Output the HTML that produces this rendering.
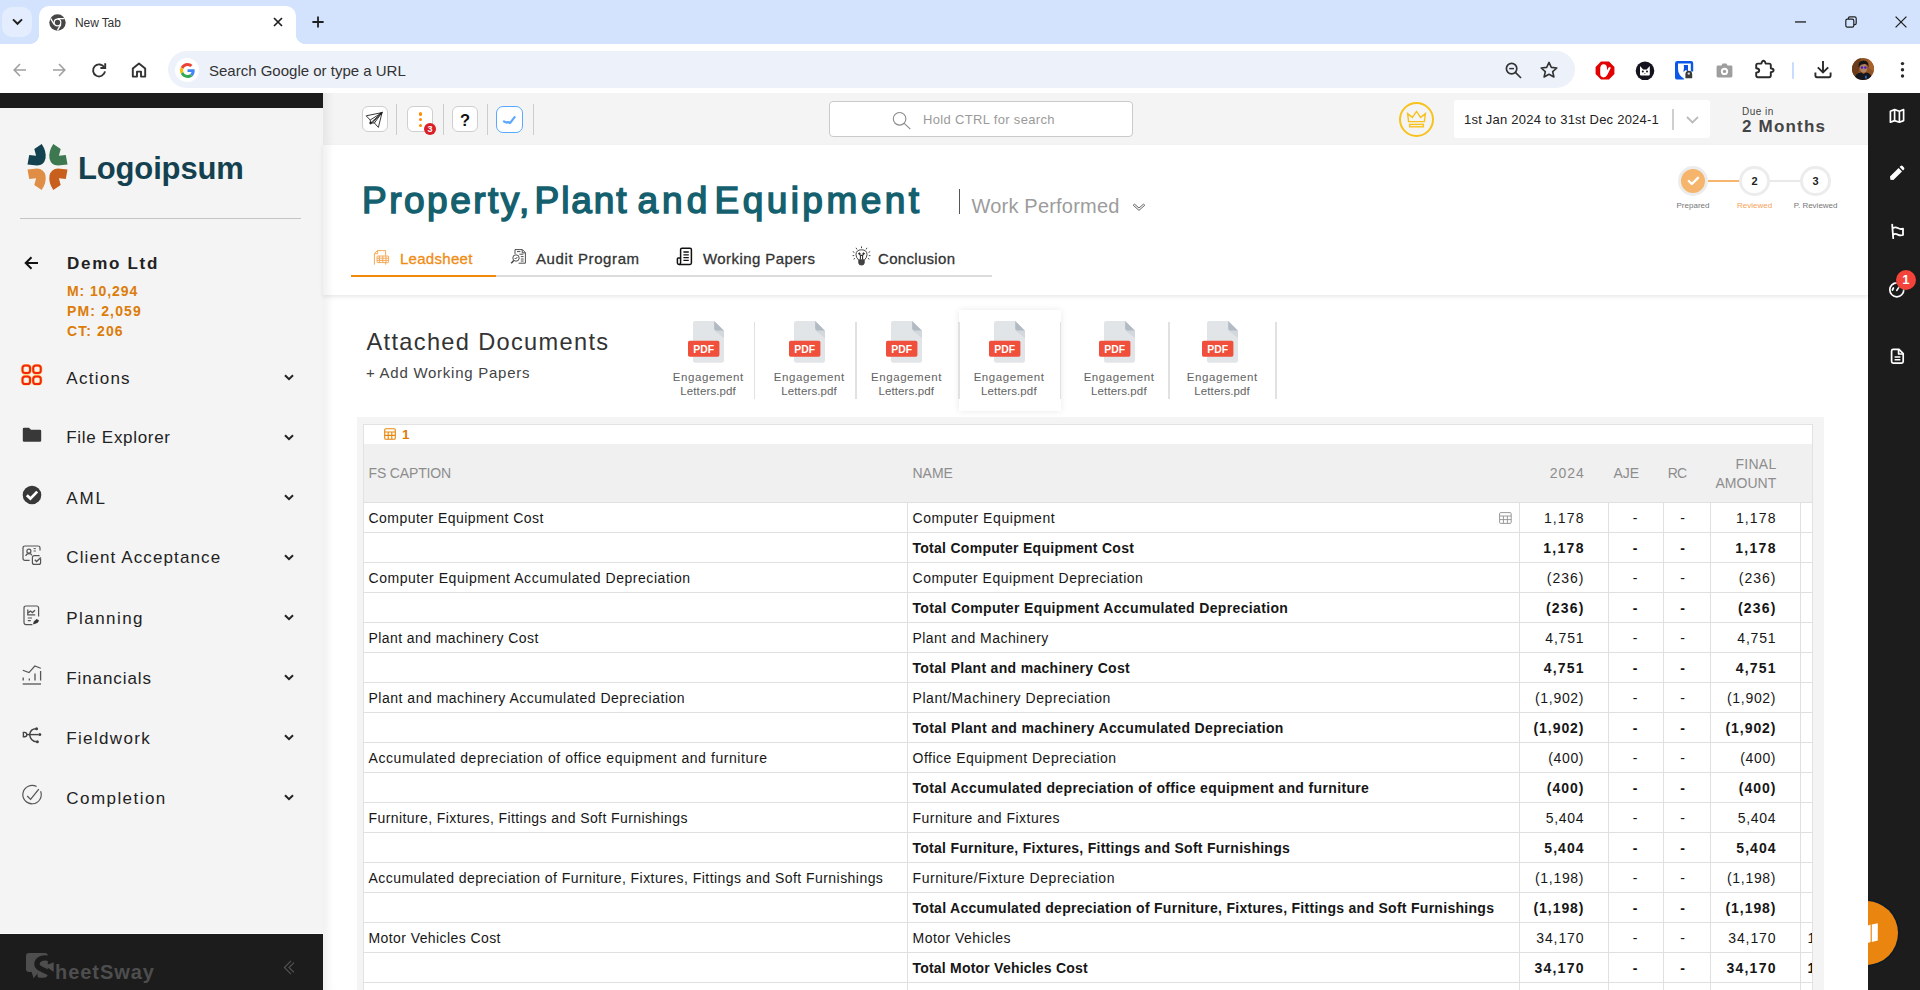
<!DOCTYPE html>
<html>
<head>
<meta charset="utf-8">
<title>New Tab</title>
<style>
*{box-sizing:border-box;margin:0;padding:0}
html,body{width:1920px;height:990px;overflow:hidden;background:#fff;font-family:"Liberation Sans",sans-serif;color:#222}
.abs{position:absolute}
svg{position:absolute;overflow:visible}
/* ---------- browser chrome ---------- */
#tabstrip{position:absolute;left:0;top:0;width:1920px;height:44px;background:#d3e3fd}
#tabsearch{position:absolute;left:2px;top:7px;width:30px;height:30px;border-radius:10px;background:#e4edfd}
#tab{position:absolute;left:39px;top:6px;width:257px;height:38px;background:#fff;border-radius:10px 10px 0 0}
#tab:before,#tab:after{content:"";position:absolute;bottom:0;width:10px;height:10px}
#tab:before{left:-10px;background:radial-gradient(circle at 0 0,transparent 10px,#fff 10.5px)}
#tab:after{right:-10px;background:radial-gradient(circle at 100% 0,transparent 10px,#fff 10.5px)}
#tabtitle{position:absolute;left:75px;top:15.5px;font-size:12px;color:#333;letter-spacing:-.1px}
#toolbar{position:absolute;left:0;top:44px;width:1920px;height:49px;background:#fff}
#omni{position:absolute;left:168px;top:51px;width:1407px;height:37px;border-radius:19px;background:#edf2fa}
#omnitext{position:absolute;left:209px;top:62px;font-size:15px;color:#333;white-space:nowrap}
/* ---------- app shell ---------- */
#side{position:absolute;left:0;top:93px;width:323px;height:897px;background:#f4f4f4}
#sidetop{position:absolute;left:0;top:93px;width:323px;height:15px;background:#1c1c1c}
#sidebot{position:absolute;left:0;top:932.8px;width:323px;height:57px;background:#1c1c1c;border-top:1px solid #fbfbfb}
#rside{position:absolute;left:1868px;top:93px;width:52px;height:897px;background:#1c1c1c}
#topbar{position:absolute;left:323px;top:93px;width:1545px;height:52px;background:#f4f4f4}
.mi{position:absolute;left:66.3px;font-size:17px;letter-spacing:.95px;color:#222;white-space:nowrap}
</style>
</head>
<body>
<!-- BROWSER CHROME -->
<div id="tabstrip"></div>
<div id="tabsearch"></div>
<div id="tab"></div>
<div id="tabtitle">New Tab</div>
<div id="toolbar"></div>
<div id="omni"></div>
<div id="omnitext">Search Google or type a URL</div>
<!--CHROME-ICONS-START-->
<!-- tab strip icons -->
<svg style="left:12px;top:18px" width="11" height="8" viewBox="0 0 11 8" fill="none" stroke="#1f1f1f" stroke-width="1.9"><path d="M1,1.4 L5.5,5.8 L10,1.4"/></svg>
<svg style="left:49px;top:14px" width="17" height="17" viewBox="0 0 17 17"><circle cx="8.5" cy="8.5" r="8.2" fill="#474747"/><circle cx="8.5" cy="8.5" r="3.9" fill="#fff"/><circle cx="8.5" cy="8.5" r="2.7" fill="#474747"/><path d="M8.5,4.6 H15.6 M5.1,10.4 L1.6,4.4 M11.9,10.4 L8.4,16.4" stroke="#fff" stroke-width="1.3" fill="none"/></svg>
<svg style="left:273px;top:17px" width="10" height="10" viewBox="0 0 10 10" fill="none" stroke="#1f1f1f" stroke-width="1.7"><path d="M1,1 L9,9 M9,1 L1,9"/></svg>
<svg style="left:312px;top:16px" width="12" height="12" viewBox="0 0 12 12" fill="none" stroke="#1f1f1f" stroke-width="1.8"><path d="M6,0.4 V11.6 M0.4,6 H11.6"/></svg>
<svg style="left:1795px;top:21px" width="11" height="2" viewBox="0 0 11 2"><rect width="11" height="1.3" y=".3" fill="#1f1f1f"/></svg>
<svg style="left:1845px;top:16px" width="12" height="12" viewBox="0 0 12 12" fill="none" stroke="#1f1f1f" stroke-width="1.2"><rect x=".8" y="3.2" width="8" height="8" rx="1.6"/><path d="M3.4,3 V2.2 Q3.4,.8 4.8,.8 H9.6 Q11.2,.8 11.2,2.4 V7.2 Q11.2,8.6 9.8,8.6 H9"/></svg>
<svg style="left:1895px;top:16px" width="12" height="12" viewBox="0 0 12 12" fill="none" stroke="#1f1f1f" stroke-width="1.3"><path d="M.6,.6 L11.4,11.4 M11.4,.6 L.6,11.4"/></svg>
<!-- toolbar nav -->
<svg style="left:13px;top:63px" width="14" height="14" viewBox="0 0 14 14" fill="none" stroke="#a0a0a0" stroke-width="1.6"><path d="M13,7 H1.6 M7,1 L1.2,7 L7,13"/></svg>
<svg style="left:52px;top:63px" width="14" height="14" viewBox="0 0 14 14" fill="none" stroke="#a0a0a0" stroke-width="1.6"><path d="M1,7 H12.4 M7,1 L12.8,7 L7,13"/></svg>
<svg style="left:91px;top:62px" width="16" height="16" viewBox="0 0 16 16" fill="none" stroke="#333" stroke-width="1.9"><path d="M13.4,5.6 A6,6 0 1 0 14,9.4"/><path d="M14.2,1.2 V6 H9.4" stroke-linejoin="miter"/></svg>
<svg style="left:131px;top:62px" width="16" height="16" viewBox="0 0 16 16" fill="none" stroke="#333" stroke-width="1.9" stroke-linejoin="round"><path d="M1.8,14.6 V6.6 L8,1.6 L14.2,6.6 V14.6 H10 V9.6 H6 V14.6 Z"/></svg>
<div class="abs" style="left:175px;top:58px;width:24px;height:24px;border-radius:50%;background:#fff"></div>
<svg style="left:179.5px;top:62.5px" width="15" height="15" viewBox="0 0 48 48"><path fill="#EA4335" d="M24 9.5c3.54 0 6.71 1.22 9.21 3.6l6.85-6.85C35.9 2.38 30.47 0 24 0 14.62 0 6.51 5.38 2.56 13.22l7.98 6.19C12.43 13.72 17.74 9.5 24 9.5z"/><path fill="#4285F4" d="M46.98 24.55c0-1.57-.15-3.09-.38-4.55H24v9.02h12.94c-.58 2.96-2.26 5.48-4.78 7.18l7.73 6c4.51-4.18 7.09-10.36 7.09-17.65z"/><path fill="#FBBC05" d="M10.53 28.59c-.48-1.45-.76-2.99-.76-4.59s.27-3.14.76-4.59l-7.98-6.19C.92 16.46 0 20.12 0 24c0 3.880.92 7.54 2.56 10.78l7.97-6.19z"/><path fill="#34A853" d="M24 48c6.48 0 11.93-2.130 15.89-5.81l-7.73-6c-2.15 1.450-4.92 2.300-8.160 2.300-6.260 0-11.570-4.220-13.470-9.910l-7.980 6.190C6.510 42.620 14.620 48 24 48z"/></svg>
<!-- omnibox right icons -->
<svg style="left:1505px;top:62px" width="17" height="17" viewBox="0 0 17 17" fill="none" stroke="#333" stroke-width="1.7"><circle cx="6.6" cy="6.6" r="5.2"/><path d="M10.4,10.4 L16,16"/><path d="M4.2,6.6 H9" stroke-width="1.5"/></svg>
<svg style="left:1540px;top:61px" width="18" height="17" viewBox="0 0 18 17" fill="none" stroke="#333" stroke-width="1.6" stroke-linejoin="round"><path d="M9,1.4 L11.3,6.4 L16.8,7 L12.7,10.7 L13.9,16 L9,13.2 L4.1,16 L5.3,10.7 L1.2,7 L6.7,6.4 Z"/></svg>
<!-- extensions -->
<svg style="left:1595px;top:61px" width="20" height="19" viewBox="0 0 20 19"><path d="M6,0.6 H14 L19.4,6 V13 L14,18.4 H6 L0.6,13 V6 Z" fill="#e30000"/><path d="M5.2,8 Q5.2,3.4 8.6,3.2 Q12,3.2 12,7.6 V9.4 L13.6,6.6 Q14.4,5.6 15.4,6.2 Q16,6.8 15.4,7.8 L12.2,14 Q11,16.4 8.6,16.4 Q5.2,16.4 5.2,12.6 Z" fill="#fff"/></svg>
<svg style="left:1635px;top:61px" width="20" height="20" viewBox="0 0 20 20"><circle cx="10" cy="9.8" r="9.3" fill="#14131f"/><path d="M5,5 L8.2,8.4 H11.6 L14.8,5 V13.4 Q14.8,14.4 13.8,14.4 H6 Q5,14.4 5,13.4 Z" fill="#fff"/><circle cx="7.8" cy="10.6" r="1" fill="#14131f"/><circle cx="12" cy="10.6" r="1" fill="#14131f"/><path d="M9.1,12.2 H10.7 L9.9,13.3 Z" fill="#14131f"/></svg>
<svg style="left:1675px;top:61px" width="19" height="19" viewBox="0 0 19 19"><path d="M2.4,0 H16 Q18.2,0 18.2,2.2 V10.4 H11 L9,18.6 H2.2 Q0,18.6 0,16.4 V2.4 Q0,0 2.4,0 Z" fill="#0b57e8"/><path d="M3,2.6 H15.8 V10.4 L9.4,18 Q3,14 3,8 Z" fill="#fff"/><path d="M8.8,4 H13 V10.6 L10.9,9 L8.4,11 Q9.4,7.4 8.8,4 Z" fill="#0b4fe0"/><path d="M10.4,13.4 Q10.4,9.8 13.8,9.8 Q17.2,9.8 17.2,13.4 V17.2 H10.4 Z" fill="#3a3a3a"/><circle cx="13.8" cy="12.6" r="1.2" fill="#d8d8d8"/></svg>
<svg style="left:1716px;top:63px" width="17" height="15" viewBox="0 0 17 15"><path d="M5.4,2.4 L6.6,0.6 H10.4 L11.6,2.4 H15 Q16.4,2.4 16.4,3.8 V13 Q16.4,14.4 15,14.4 H2 Q0.6,14.4 0.6,13 V3.8 Q0.6,2.4 2,2.4 Z" fill="#9e9e9e"/><circle cx="8.5" cy="8.4" r="3.6" fill="#fff"/><circle cx="8.5" cy="8.4" r="1.7" fill="#9e9e9e"/></svg>
<svg style="left:1755px;top:60px" width="20" height="19" viewBox="0 0 20 19" fill="none" stroke="#2a2a2a" stroke-width="1.9" stroke-linejoin="round"><path d="M2.8,3.6 H6.4 Q7,0.8 8.5,0.8 Q10,0.8 10.6,3.6 H14.2 Q15.8,3.6 15.8,5.2 V8.2 Q18.6,8.6 18.6,10.2 Q18.6,11.8 15.8,12.2 V15.6 Q15.8,17.2 14.2,17.2 H2.8 Q1.2,17.2 1.2,15.6 V12.6 Q4.2,12.4 4.2,10.4 Q4.2,8.4 1.2,8.2 V5.2 Q1.2,3.6 2.8,3.6 Z"/></svg>
<div class="abs" style="left:1791.8px;top:61.5px;width:2.2px;height:17px;background:#c9dcfc;border-radius:1px"></div>
<svg style="left:1814px;top:60px" width="18" height="19" viewBox="0 0 18 19" fill="none" stroke="#2a2a2a" stroke-width="1.9"><path d="M9,1 V12 M3.8,7.4 L9,12.4 L14.2,7.4"/><path d="M1.4,12.6 V15.6 Q1.4,17.2 3,17.2 H15 Q16.6,17.2 16.6,15.6 V12.6"/></svg>
<svg style="left:1852px;top:58.3px" width="22" height="22" viewBox="0 0 22 22"><defs><clipPath id="avc"><circle cx="11" cy="11" r="11"/></clipPath></defs><g clip-path="url(#avc)"><rect width="22" height="22" fill="#8e5326"/><path d="M0,0 H9 L5,22 H0 Z" fill="#6b3d1c"/><path d="M16,0 H22 V14 L17,10 Z" fill="#a8622a"/><ellipse cx="11.6" cy="10.2" rx="3.6" ry="4.6" fill="#b08462"/><path d="M6.4,9.6 Q6,2.4 11.6,2.6 Q17,2.6 16.6,9.4 Q15.4,5.6 11.6,6.2 Q8.4,6 6.4,9.6 Z" fill="#141414"/><circle cx="10" cy="9.6" r="1.3" fill="#4a22c8"/><circle cx="13.4" cy="9.6" r="1.3" fill="#4a22c8"/><path d="M2,22 Q3,14.6 9.4,14.4 L11.6,16 L13.8,14.4 Q19.6,14.6 20.4,22 Z" fill="#15171c"/><path d="M13,18 L14.6,17.4 L14.8,20.4 L13.2,20.6 Z" fill="#2f6fd6"/></g></svg>
<svg style="left:1900px;top:61px" width="5" height="18" viewBox="0 0 5 18" fill="#2a2a2a"><circle cx="2.5" cy="2.6" r="1.7"/><circle cx="2.5" cy="8.8" r="1.7"/><circle cx="2.5" cy="15" r="1.7"/></svg>
<!--CHROME-ICONS-END-->

<!-- APP SHELL -->
<div id="side"></div>
<div id="sidetop"></div>
<div id="sidebot"></div>
<div id="topbar"></div>
<div id="rside"></div>
<!--SIDEBAR-START-->
<!-- logo -->
<svg style="left:27px;top:144px" width="41" height="46" viewBox="-20.5 -23 41 46">
  <path d="M-13.2,-18 L-5.8,-23 Q-0.8,-15.5 -2,-8.5 Q-3.6,-1.6 -10.5,-1.4 L-20,-2.6 L-18.3,-12 L-11.4,-11.2 Z" fill="#14414f"/>
  <path d="M-13.2,-18 L-5.8,-23 Q-0.8,-15.5 -2,-8.5 Q-3.6,-1.6 -10.5,-1.4 L-20,-2.6 L-18.3,-12 L-11.4,-11.2 Z" transform="scale(-1,1)" fill="#3d7850"/>
  <path d="M-13.2,-18 L-5.8,-23 Q-0.8,-15.5 -2,-8.5 Q-3.6,-1.6 -10.5,-1.4 L-20,-2.6 L-18.3,-12 L-11.4,-11.2 Z" transform="scale(1,-1)" fill="#e08e45"/>
  <path d="M-13.2,-18 L-5.8,-23 Q-0.8,-15.5 -2,-8.5 Q-3.6,-1.6 -10.5,-1.4 L-20,-2.6 L-18.3,-12 L-11.4,-11.2 Z" transform="scale(-1,-1)" fill="#c95f1c"/>
</svg>
<div class="abs" style="left:78px;top:151px;font-size:31px;font-weight:bold;color:#14414f;letter-spacing:-.15px;line-height:35px">Logoipsum</div>
<div class="abs" style="left:20px;top:218px;width:281px;height:1px;background:#c4c4c4"></div>
<!-- client -->
<svg style="left:24px;top:256px" width="15" height="14" viewBox="0 0 15 14"><path d="M14,7 H2 M7.5,1.2 L1.7,7 L7.5,12.8" fill="none" stroke="#111" stroke-width="2"/></svg>
<div class="abs" style="left:67px;top:254px;font-size:17px;font-weight:bold;letter-spacing:1.7px;color:#222;white-space:nowrap">Demo Ltd</div>
<div class="abs" style="left:67px;top:283px;font-size:14px;font-weight:bold;letter-spacing:.9px;color:#dc7c0a;white-space:nowrap">M: 10,294</div>
<div class="abs" style="left:67px;top:303px;font-size:14px;font-weight:bold;letter-spacing:1.15px;color:#dc7c0a;white-space:nowrap">PM: 2,059</div>
<div class="abs" style="left:67px;top:323px;font-size:14px;font-weight:bold;letter-spacing:1.1px;color:#dc7c0a;white-space:nowrap">CT: 206</div>
<!-- menu -->
<div class="mi" style="top:368.5px;letter-spacing:1.26px">Actions</div>
<div class="mi" style="top:427.5px;letter-spacing:0.69px">File Explorer</div>
<div class="mi" style="top:488.8px;letter-spacing:1.90px">AML</div>
<div class="mi" style="top:548.0px;letter-spacing:1.11px">Client Acceptance</div>
<div class="mi" style="top:608.5px;letter-spacing:1.44px">Planning</div>
<div class="mi" style="top:668.5px;letter-spacing:0.90px">Financials</div>
<div class="mi" style="top:728.5px;letter-spacing:1.33px">Fieldwork</div>
<div class="mi" style="top:788.8px;letter-spacing:1.44px">Completion</div>
<!-- chevrons -->
<svg style="left:284px;top:374px" width="10" height="7" viewBox="0 0 10 7"><path d="M1,1.2 L5,5.2 L9,1.2" fill="none" stroke="#222" stroke-width="2"/></svg>
<svg style="left:284px;top:434px" width="10" height="7" viewBox="0 0 10 7"><path d="M1,1.2 L5,5.2 L9,1.2" fill="none" stroke="#222" stroke-width="2"/></svg>
<svg style="left:284px;top:494px" width="10" height="7" viewBox="0 0 10 7"><path d="M1,1.2 L5,5.2 L9,1.2" fill="none" stroke="#222" stroke-width="2"/></svg>
<svg style="left:284px;top:554px" width="10" height="7" viewBox="0 0 10 7"><path d="M1,1.2 L5,5.2 L9,1.2" fill="none" stroke="#222" stroke-width="2"/></svg>
<svg style="left:284px;top:614px" width="10" height="7" viewBox="0 0 10 7"><path d="M1,1.2 L5,5.2 L9,1.2" fill="none" stroke="#222" stroke-width="2"/></svg>
<svg style="left:284px;top:674px" width="10" height="7" viewBox="0 0 10 7"><path d="M1,1.2 L5,5.2 L9,1.2" fill="none" stroke="#222" stroke-width="2"/></svg>
<svg style="left:284px;top:734px" width="10" height="7" viewBox="0 0 10 7"><path d="M1,1.2 L5,5.2 L9,1.2" fill="none" stroke="#222" stroke-width="2"/></svg>
<svg style="left:284px;top:794px" width="10" height="7" viewBox="0 0 10 7"><path d="M1,1.2 L5,5.2 L9,1.2" fill="none" stroke="#222" stroke-width="2"/></svg>
<!-- menu icons -->
<svg style="left:21px;top:364px" width="22" height="22" viewBox="0 0 22 22" fill="none" stroke="#ffb700" stroke-width="3.2" opacity=".55"><rect x="1.5" y="1.5" width="7.6" height="7.6" rx="2.6"/><rect x="12.2" y="1.5" width="7.6" height="7.6" rx="2.6"/><rect x="1.5" y="12.4" width="7.6" height="7.6" rx="2.6"/><rect x="12.2" y="12.4" width="7.6" height="7.6" rx="2.6"/></svg>
<svg style="left:21px;top:364px" width="22" height="22" viewBox="0 0 22 22" fill="none" stroke="#f5260f" stroke-width="2"><rect x="1.5" y="1.5" width="7.6" height="7.6" rx="2.6"/><rect x="12.2" y="1.5" width="7.6" height="7.6" rx="2.6"/><rect x="1.5" y="12.4" width="7.6" height="7.6" rx="2.6"/><rect x="12.2" y="12.4" width="7.6" height="7.6" rx="2.6"/></svg>
<svg style="left:22px;top:427px" width="20" height="16" viewBox="0 0 20 16"><path d="M0.8,2 Q0.8,0.8 2,0.8 H7 L9,2.8 H18 Q19.2,2.8 19.2,4 V13.6 Q19.2,14.8 18,14.8 H2 Q0.8,14.8 0.8,13.6 Z" fill="#383838"/></svg>
<svg style="left:22px;top:485px" width="20" height="20" viewBox="0 0 20 20"><circle cx="10" cy="10" r="9.3" fill="#383838"/><path d="M4.8,10.2 L8.4,13.6 L15.2,6.6" fill="none" stroke="#fff" stroke-width="2.7"/></svg>
<svg style="left:22px;top:545px" width="21" height="21" viewBox="0 0 21 21" fill="none" stroke="#555" stroke-width="1.2"><path d="M7.6,15.4 H3 Q1,15.4 1,13.4 V3 Q1,1 3,1 H16 Q18,1 18,3 V5.6"/><circle cx="6.9" cy="6.2" r="2"/><path d="M3.8,11 Q4.2,8.6 6.9,8.6 Q9.4,8.6 9.9,10.4"/><path d="M11.6,3.6 H13.8 M11.6,6 H13.8" stroke-width="1"/><path d="M18.6,13.6 V17.4 Q18.6,19.4 16.6,19.4 H12.4 Q10.4,19.4 10.4,17.4 V12.6 Q10.4,10.6 12.4,10.6 H17.6"/><path d="M12.8,14.8 L14.6,16.6 L18.8,12.4" stroke-width="1.4"/></svg>
<svg style="left:23px;top:605px" width="18" height="21" viewBox="0 0 18 21" fill="none" stroke="#555" stroke-width="1.2"><path d="M9.4,19.6 H3 Q1,19.6 1,17.6 V3 Q1,1 3,1 H13.6 Q15.6,1 15.6,3 V11.6"/><path d="M4.8,4.6 V9.8 H12.2 M5.4,7.8 L7.4,6 L9.4,7.6 L12,5.2" stroke-width="1.3"/><path d="M4.8,13 H9 M4.8,15.6 H7.8"/><path d="M10.6,19 L11.2,16.6 L13.4,14.4 L15.6,15.4 L14.6,17.4 Z" fill="#333" stroke="#333" stroke-width=".8"/></svg>
<svg style="left:22px;top:665px" width="21" height="21" viewBox="0 0 21 21" fill="none" stroke="#555" stroke-width="1.3"><path d="M.7,19 H19"/><path d="M1.2,12.6 V15.6 M7.3,13.4 V15.6 M13,8.6 V15.6 M18.6,6 V15.6"/><path d="M.8,5.2 L7,7.6 L12.8,1 L18.8,3.2" stroke-width="1.2"/></svg>
<svg style="left:22px;top:726px" width="21" height="19" viewBox="0 0 21 19" fill="none" stroke="#444" stroke-width="1.4"><path d="M2.6,6.4 H1.4 V10.8 H2.6 Q4.8,10.8 4.8,8.6 Q4.8,6.4 2.6,6.4 Z"/><path d="M5,8.6 H16.4"/><path d="M7.6,8.6 Q8.6,2.8 14,2.8"/><path d="M7.6,8.6 Q8.6,15.6 14.6,15.8"/><circle cx="14.6" cy="2.8" r="1.5" fill="#444" stroke="none"/><circle cx="17.8" cy="8.6" r="1.5" fill="#444" stroke="none"/><circle cx="15.4" cy="15.8" r="1.5" fill="#444" stroke="none"/></svg>
<svg style="left:22px;top:785px" width="21" height="21" viewBox="0 0 21 21" fill="none" stroke="#555" stroke-width="1.2"><path d="M14.6,1.6 A9.2,9.2 0 1 0 18.6,6.2"/><path d="M5.2,11 L8.6,14.4 L16.8,4.2" stroke-width="1.3"/></svg>
<!-- sidebar bottom brand -->
<svg style="left:24px;top:951px" width="32" height="29" viewBox="24 951 32 29"><path d="M29,953 H45 Q47.8,953 47.8,956 V974 Q47.8,977.8 43,977.8 H39.5 Q37,977.8 37.5,973.6 L33.6,978.3 L31.6,972 H29 Q26,972 26,969 V956 Q26,953 29,953 Z" fill="#4e4e4e"/><path d="M49.5,958.6 Q45,957 41,958.6 Q36.6,960.6 36.9,964.6 Q37.2,967.6 42,969.4 L55,975.6" fill="none" stroke="#1c1c1c" stroke-width="5.2"/><path d="M41.8,964.3 Q46,966.2 53.7,962.2 V972 Q48,967.6 41.8,964.3 Z" fill="#4e4e4e"/></svg>
<div class="abs" style="left:55px;top:960.5px;font-size:20px;font-weight:bold;color:#4e4e4e;letter-spacing:.95px;white-space:nowrap;line-height:23px">heetSway</div>
<svg style="left:283px;top:960px" width="12" height="15" viewBox="0 0 12 15" fill="none" stroke="#555" stroke-width="1.1"><path d="M8,0.8 L1.4,7.5 L8,14.2 M11,2.6 L6,7.5 L11,12.4"/></svg>
<!--SIDEBAR-END-->
<!--TOPBAR-START-->
<style>
.tb{position:absolute;top:106px;width:26px;height:26px;background:#fff;border:1px solid #cfcfcf;border-radius:6px}
.tsep{position:absolute;top:104px;width:1px;height:31px;background:#cdcdcd}
.t{position:absolute;white-space:nowrap}
.ttl{top:179px;font-size:37px;font-weight:normal;-webkit-text-stroke:1.5px #15606e;color:#15606e;line-height:44px}
</style>
<div class="tb" style="left:362px"></div>
<svg style="left:365px;top:111px" width="19" height="18" viewBox="0 0 19 18" fill="none" stroke="#222" stroke-width=".9" stroke-linejoin="round"><path d="M17,1.6 L1.2,4.8 L5.2,9 L5.6,12 L9.4,12 L13.4,16.4 Z"/><path d="M17,1.6 L5.2,9 M17,1.6 L5.6,12 M17,1.6 L9.4,12 M16,2.4 L7.4,12"/><path d="M17.4,1 L14.6,2.6 L16,4 Z" fill="#111"/><circle cx="5.6" cy="12" r=".9" fill="#111"/></svg>
<div class="tsep" style="left:396px"></div>
<div class="tb" style="left:407px"></div>
<div class="abs" style="left:419px;top:112px;width:3px;height:3.6px;border-radius:1.5px;background:#ff8c00"></div>
<div class="abs" style="left:419px;top:117.8px;width:3px;height:3.6px;border-radius:1.5px;background:#ff8c00"></div>
<div class="abs" style="left:419px;top:123.6px;width:3px;height:3.6px;border-radius:1.5px;background:#ff8c00"></div>
<div class="abs" style="left:424px;top:123.3px;width:12px;height:12px;border-radius:6px;background:#d92027;color:#fff;font-size:9px;font-weight:bold;text-align:center;line-height:12px">3</div>
<div class="tsep" style="left:443px"></div>
<div class="tb" style="left:452px"></div>
<div class="t" style="left:452px;top:109.5px;width:26px;text-align:center;font-size:16.5px;font-weight:bold;color:#111;line-height:20px">?</div>
<div class="tsep" style="left:487px"></div>
<div class="tb" style="left:496px;width:27px;height:27px;border:1.6px solid #58a9ff;border-radius:7px"></div>
<svg style="left:502px;top:114px" width="15" height="12" viewBox="0 0 15 12" fill="none" stroke="#4a9fff" stroke-width="2.2" stroke-linecap="round" stroke-linejoin="round" opacity=".9"><path d="M2,7.4 L4.6,8.6 L6.2,8 L8,9.2 L12.6,3.2"/></svg>
<div class="tsep" style="left:533px"></div>
<!-- search -->
<div class="abs" style="left:829px;top:101px;width:304px;height:35.5px;background:#fff;border:1.3px solid #cacaca;border-radius:4px"></div>
<svg style="left:891px;top:110px" width="22" height="21" viewBox="0 0 22 21" fill="none" stroke="#8a8a8a" stroke-width="1.1"><circle cx="8.6" cy="8.8" r="6.3"/><path d="M13.2,13.4 L19.4,19.2"/></svg>
<div class="t" style="left:923px;top:112px;font-size:13px;letter-spacing:.33px;color:#9a9a9a;line-height:15px">Hold CTRL for search</div>
<!-- crown -->
<div class="abs" style="left:1399px;top:102px;width:35px;height:35px;border-radius:50%;border:2px solid #f8c21c"></div>
<svg style="left:1406px;top:110px" width="21" height="19" viewBox="0 0 21 19" fill="none" stroke="#f8c21c" stroke-width="1.4" stroke-linejoin="miter"><path d="M2.6,11.6 L1.6,3.6 L6.4,7.4 L10.5,1.4 L14.6,7.4 L19.4,3.6 L18.4,11.6 Z"/><rect x="3.6" y="14.4" width="13.8" height="2.4"/></svg>
<!-- period select -->
<div class="abs" style="left:1454px;top:100px;width:256px;height:38px;background:#fff;border-radius:3px"></div>
<div class="t" style="left:1464px;top:112px;font-size:13px;letter-spacing:.23px;color:#222;line-height:15px">1st Jan 2024 to 31st Dec 2024-1</div>
<div class="abs" style="left:1672px;top:109px;width:2px;height:21px;background:#cfcfcf"></div>
<svg style="left:1686px;top:116px" width="13" height="8" viewBox="0 0 13 8" fill="none" stroke="#bbb" stroke-width="1.8"><path d="M1,1 L6.5,6.4 L12,1"/></svg>
<div class="t" style="left:1742px;top:106px;font-size:10px;letter-spacing:.5px;color:#444;line-height:11px">Due in</div>
<div class="t" style="left:1742px;top:117px;font-size:17px;font-weight:bold;letter-spacing:1.2px;color:#444;line-height:20px">2 Months</div>
<!--TOPBAR-END-->
<!--HEADER-START-->
<!-- header area -->
<div class="abs" style="left:323px;top:145px;width:1545px;height:150px;background:#fff;box-shadow:0 2px 4px rgba(0,0,0,.09)"></div>
<div class="t ttl" style="left:362px;letter-spacing:2.5px">Property,</div><div class="t ttl" style="left:534.5px;letter-spacing:1.95px">Plant</div><div class="t ttl" style="left:637.5px;letter-spacing:4px">and</div><div class="t ttl" style="left:714.5px;letter-spacing:3.45px">Equipment</div>
<div class="abs" style="left:958.8px;top:189px;width:1.4px;height:24.6px;background:#555"></div>
<div class="t" style="left:971.5px;top:194.6px;font-size:20px;letter-spacing:.2px;color:#9c9c9c;line-height:23px">Work Performed</div>
<svg style="left:1132px;top:203px" width="14" height="11" viewBox="0 0 14 11" fill="none" stroke="#666" stroke-width="1"><path d="M1.2,2.2 L7,7.4 L12.8,2.2 M2.6,1.2 L7,5 L11.4,1.2 M1.2,2.2 L2.6,1.2 M12.8,2.2 L11.4,1.2"/></svg>
<!-- stepper -->
<div class="abs" style="left:1708px;top:179.6px;width:32px;height:2px;background:#f5b56c"></div>
<div class="abs" style="left:1769px;top:179.6px;width:32px;height:2px;background:#e9e9e9"></div>
<div class="abs" style="left:1678px;top:165.5px;width:30.4px;height:30.4px;border-radius:50%;background:#f5b56c;border:3.4px solid #ececec"></div>
<svg style="left:1687px;top:176px" width="13" height="10" viewBox="0 0 13 10" fill="none" stroke="#fff" stroke-width="2.4" stroke-linecap="round" stroke-linejoin="round"><path d="M1.8,5 L4.8,8 L11,1.8"/></svg>
<div class="abs" style="left:1739.4px;top:165.5px;width:30.4px;height:30.4px;border-radius:50%;background:#fff;border:3.4px solid #ececec"></div>
<div class="abs" style="left:1800.4px;top:165.5px;width:30.4px;height:30.4px;border-radius:50%;background:#fff;border:3.4px solid #ececec"></div>
<div class="t" style="left:1739.4px;top:175px;width:30.4px;text-align:center;font-size:11px;font-weight:bold;color:#222;line-height:12px">2</div>
<div class="t" style="left:1800.4px;top:175px;width:30.4px;text-align:center;font-size:11px;font-weight:bold;color:#222;line-height:12px">3</div>
<div class="t" style="left:1663px;top:201px;width:60px;text-align:center;font-size:8px;color:#777;line-height:10px">Prepared</div>
<div class="t" style="left:1724.6px;top:201px;width:60px;text-align:center;font-size:8px;color:#f5a257;line-height:10px">Reviewed</div>
<div class="t" style="left:1785.6px;top:201px;width:60px;text-align:center;font-size:8px;color:#777;line-height:10px">P. Reviewed</div>
<!-- tabs -->
<div class="abs" style="left:351px;top:275px;width:641px;height:2px;background:#dcdcdc"></div>
<div class="abs" style="left:351px;top:274.6px;width:145px;height:2.5px;background:#f08a0a"></div>
<svg style="left:373px;top:249px" width="17" height="17" viewBox="0 0 17 17" fill="none" stroke="#f5a04a" stroke-width=".9"><path d="M1.4,15.6 V4.6 L4.4,1.6 H12.6 V6.6"/><path d="M1.6,4.8 H4.6 V1.8"/><rect x="4" y="7" width="11.6" height="6.6" rx=".8"/><path d="M4,9.2 H15.6 M4,11.4 H15.6 M9.8,7 V13.6 M6.4,7 V13.6 M13,7 V13.6"/><path d="M12.6,13.6 V15.6"/></svg>
<div class="t" style="left:400px;top:250px;font-size:15px;-webkit-text-stroke:.3px;letter-spacing:.28px;color:#f08c14;line-height:18px">Leadsheet</div>
<svg style="left:510px;top:248px" width="17" height="17" viewBox="0 0 17 17" fill="none" stroke="#444" stroke-width=".95"><path d="M5,6 V1.6 H12.4 L15.4,4.6 V15.2 H8.6"/><path d="M12.2,1.8 V4.8 H15.2"/><path d="M7,3.6 H10.4 M9.4,6.2 H13.4 M10.8,8.6 H13.6 M10.8,11 H13.6 M10.8,13 H13.6"/><circle cx="6" cy="10" r="3.2"/><path d="M4.6,10 L5.6,11 L7.4,9"/><path d="M3.8,12.4 L1.2,15.2" stroke-width="1.5"/></svg>
<div class="t" style="left:536px;top:250px;font-size:15px;-webkit-text-stroke:.3px;letter-spacing:.6px;color:#333;line-height:18px">Audit Program</div>
<svg style="left:676px;top:247px" width="17" height="19" viewBox="0 0 17 19" fill="none" stroke="#111" stroke-width="1.5" stroke-linejoin="round"><path d="M4.6,11 V2.6 Q4.6,1.2 6,1.2 H14 Q15.4,1.2 15.4,2.6 V16 Q15.4,17.4 14,17.4 H3"/><path d="M1.4,11.8 Q1.4,11 2.2,11 H4.6 V16 Q4.6,17.4 3,17.4 Q1.4,17.4 1.4,16 Z"/><path d="M7.4,5 H12.8 M7.4,7.8 H12.8 M7.4,10.6 H12.8 M7.4,13.4 H12.8" stroke-width="1.3"/></svg>
<div class="t" style="left:703px;top:250px;font-size:15px;-webkit-text-stroke:.3px;letter-spacing:.43px;color:#333;line-height:18px">Working Papers</div>
<svg style="left:852px;top:246px" width="19" height="20" viewBox="0 0 19 20" fill="none" stroke="#333" stroke-width=".9"><path d="M6.6,14 Q4,11.6 4,8.6 Q4,3.8 9.5,3.8 Q15,3.8 15,8.6 Q15,11.6 12.4,14 Z"/><path d="M6.8,14.2 H12.2 V17 Q12.2,19 9.5,19 Q6.8,19 6.8,17 Z" fill="#444"/><path d="M9.5,0.4 V2.2 M4,1.8 L5,3.4 M15,1.8 L14,3.4 M0.8,5.6 L2.4,6.4 M18.2,5.6 L16.6,6.4 M0.6,9.6 H2.2 M18.4,9.6 H16.8 M1.6,13.2 L3,12.4 M17.4,13.2 L16,12.4"/><path d="M8.4,13.8 V9.4 M10.6,13.8 V9.4 M7.4,8 L8.4,9.4 H10.6 L11.6,8" stroke-width="1.1"/><circle cx="7.4" cy="7.6" r=".8" fill="#333"/><circle cx="11.6" cy="7.6" r=".8" fill="#333"/></svg>
<div class="t" style="left:878px;top:250px;font-size:15px;-webkit-text-stroke:.3px;letter-spacing:.31px;color:#333;line-height:18px">Conclusion</div>
<!--HEADER-END-->
<!--DOCS-START-->
<div class="t" style="left:366.5px;top:327.5px;font-size:23.6px;letter-spacing:1.33px;color:#333;line-height:28px">Attached Documents</div>
<div class="t" style="left:366px;top:363.5px;font-size:15px;letter-spacing:.74px;color:#444;line-height:18px">+ Add Working Papers</div>
<div class="abs" style="left:959px;top:310px;width:101.5px;height:100.5px;background:#fff;box-shadow:0 0 7px rgba(0,0,0,.09)"></div>
<svg style="left:687.8px;top:321px" width="37" height="42" viewBox="0 0 37 42"><path d="M7,0 H26.2 L36,9.8 V39.6 Q36,41.8 33.8,41.8 H7.2 Q5,41.8 5,39.6 V2.2 Q5,0 7,0 Z" fill="#e2e5e8"/><path d="M26.2,0 L36,9.8 H28.4 Q26.2,9.8 26.2,7.6 Z" fill="#b2bac3"/><path d="M26.6,9.8 H36 V17 Z" fill="#cdd3d9" opacity=".75"/><rect x="0" y="19.8" width="31.4" height="15.9" rx="1.6" fill="#ef4f3b"/><text x="15.7" y="31.5" text-anchor="middle" font-family="Liberation Sans" font-weight="bold" font-size="10.4" fill="#fff">PDF</text></svg>
<div class="t" style="left:658.0px;top:370.5px;width:100.6px;text-align:center;font-size:11.5px;letter-spacing:.57px;color:#636363;line-height:13px">Engagement</div>
<div class="t" style="left:658.0px;top:384.6px;width:100.2px;text-align:center;font-size:11.5px;letter-spacing:.12px;color:#636363;line-height:13px">Letters.pdf</div>
<svg style="left:788.8px;top:321px" width="37" height="42" viewBox="0 0 37 42"><path d="M7,0 H26.2 L36,9.8 V39.6 Q36,41.8 33.8,41.8 H7.2 Q5,41.8 5,39.6 V2.2 Q5,0 7,0 Z" fill="#e2e5e8"/><path d="M26.2,0 L36,9.8 H28.4 Q26.2,9.8 26.2,7.6 Z" fill="#b2bac3"/><path d="M26.6,9.8 H36 V17 Z" fill="#cdd3d9" opacity=".75"/><rect x="0" y="19.8" width="31.4" height="15.9" rx="1.6" fill="#ef4f3b"/><text x="15.7" y="31.5" text-anchor="middle" font-family="Liberation Sans" font-weight="bold" font-size="10.4" fill="#fff">PDF</text></svg>
<div class="t" style="left:759.0px;top:370.5px;width:100.6px;text-align:center;font-size:11.5px;letter-spacing:.57px;color:#636363;line-height:13px">Engagement</div>
<div class="t" style="left:759.0px;top:384.6px;width:100.2px;text-align:center;font-size:11.5px;letter-spacing:.12px;color:#636363;line-height:13px">Letters.pdf</div>
<svg style="left:886.0px;top:321px" width="37" height="42" viewBox="0 0 37 42"><path d="M7,0 H26.2 L36,9.8 V39.6 Q36,41.8 33.8,41.8 H7.2 Q5,41.8 5,39.6 V2.2 Q5,0 7,0 Z" fill="#e2e5e8"/><path d="M26.2,0 L36,9.8 H28.4 Q26.2,9.8 26.2,7.6 Z" fill="#b2bac3"/><path d="M26.6,9.8 H36 V17 Z" fill="#cdd3d9" opacity=".75"/><rect x="0" y="19.8" width="31.4" height="15.9" rx="1.6" fill="#ef4f3b"/><text x="15.7" y="31.5" text-anchor="middle" font-family="Liberation Sans" font-weight="bold" font-size="10.4" fill="#fff">PDF</text></svg>
<div class="t" style="left:856.2px;top:370.5px;width:100.6px;text-align:center;font-size:11.5px;letter-spacing:.57px;color:#636363;line-height:13px">Engagement</div>
<div class="t" style="left:856.2px;top:384.6px;width:100.2px;text-align:center;font-size:11.5px;letter-spacing:.12px;color:#636363;line-height:13px">Letters.pdf</div>
<svg style="left:988.6px;top:321px" width="37" height="42" viewBox="0 0 37 42"><path d="M7,0 H26.2 L36,9.8 V39.6 Q36,41.8 33.8,41.8 H7.2 Q5,41.8 5,39.6 V2.2 Q5,0 7,0 Z" fill="#e2e5e8"/><path d="M26.2,0 L36,9.8 H28.4 Q26.2,9.8 26.2,7.6 Z" fill="#b2bac3"/><path d="M26.6,9.8 H36 V17 Z" fill="#cdd3d9" opacity=".75"/><rect x="0" y="19.8" width="31.4" height="15.9" rx="1.6" fill="#ef4f3b"/><text x="15.7" y="31.5" text-anchor="middle" font-family="Liberation Sans" font-weight="bold" font-size="10.4" fill="#fff">PDF</text></svg>
<div class="t" style="left:958.8px;top:370.5px;width:100.6px;text-align:center;font-size:11.5px;letter-spacing:.57px;color:#636363;line-height:13px">Engagement</div>
<div class="t" style="left:958.8px;top:384.6px;width:100.2px;text-align:center;font-size:11.5px;letter-spacing:.12px;color:#636363;line-height:13px">Letters.pdf</div>
<svg style="left:1098.6px;top:321px" width="37" height="42" viewBox="0 0 37 42"><path d="M7,0 H26.2 L36,9.8 V39.6 Q36,41.8 33.8,41.8 H7.2 Q5,41.8 5,39.6 V2.2 Q5,0 7,0 Z" fill="#e2e5e8"/><path d="M26.2,0 L36,9.8 H28.4 Q26.2,9.8 26.2,7.6 Z" fill="#b2bac3"/><path d="M26.6,9.8 H36 V17 Z" fill="#cdd3d9" opacity=".75"/><rect x="0" y="19.8" width="31.4" height="15.9" rx="1.6" fill="#ef4f3b"/><text x="15.7" y="31.5" text-anchor="middle" font-family="Liberation Sans" font-weight="bold" font-size="10.4" fill="#fff">PDF</text></svg>
<div class="t" style="left:1068.8px;top:370.5px;width:100.6px;text-align:center;font-size:11.5px;letter-spacing:.57px;color:#636363;line-height:13px">Engagement</div>
<div class="t" style="left:1068.8px;top:384.6px;width:100.2px;text-align:center;font-size:11.5px;letter-spacing:.12px;color:#636363;line-height:13px">Letters.pdf</div>
<svg style="left:1201.8px;top:321px" width="37" height="42" viewBox="0 0 37 42"><path d="M7,0 H26.2 L36,9.8 V39.6 Q36,41.8 33.8,41.8 H7.2 Q5,41.8 5,39.6 V2.2 Q5,0 7,0 Z" fill="#e2e5e8"/><path d="M26.2,0 L36,9.8 H28.4 Q26.2,9.8 26.2,7.6 Z" fill="#b2bac3"/><path d="M26.6,9.8 H36 V17 Z" fill="#cdd3d9" opacity=".75"/><rect x="0" y="19.8" width="31.4" height="15.9" rx="1.6" fill="#ef4f3b"/><text x="15.7" y="31.5" text-anchor="middle" font-family="Liberation Sans" font-weight="bold" font-size="10.4" fill="#fff">PDF</text></svg>
<div class="t" style="left:1172.0px;top:370.5px;width:100.6px;text-align:center;font-size:11.5px;letter-spacing:.57px;color:#636363;line-height:13px">Engagement</div>
<div class="t" style="left:1172.0px;top:384.6px;width:100.2px;text-align:center;font-size:11.5px;letter-spacing:.12px;color:#636363;line-height:13px">Letters.pdf</div>
<div class="abs" style="left:754.1px;top:322px;width:1.4px;height:77px;background:#e1e1e1"></div>
<div class="abs" style="left:855.4px;top:322px;width:1.4px;height:77px;background:#e1e1e1"></div>
<div class="abs" style="left:958.3px;top:322px;width:1.4px;height:77px;background:#e1e1e1"></div>
<div class="abs" style="left:1060.0px;top:322px;width:1.4px;height:77px;background:#e1e1e1"></div>
<div class="abs" style="left:1168.3px;top:322px;width:1.4px;height:77px;background:#e1e1e1"></div>
<div class="abs" style="left:1275.3px;top:322px;width:1.4px;height:77px;background:#e1e1e1"></div>
<!--DOCS-END-->
<!--TABLE-START-->
<style>
.tr{position:absolute;left:363px;width:1449px;height:30px;border-top:1px solid #e0e0e0;font-size:14px;line-height:29px;color:#161616;white-space:nowrap;overflow:hidden}
.tr b,.tr span{position:absolute;top:1px}
.b{font-weight:bold}
.c1{left:5.5px}.c2{left:549.5px}
.n{text-align:right}
.vl{position:absolute;top:502px;width:1px;height:488px;background:#e0e0e0}
</style>
<div class="abs" style="left:357px;top:417px;width:1467px;height:573px;background:#f4f4f4"></div>
<div class="abs" style="left:362.5px;top:424px;width:1450px;height:566px;background:#fff;border:1px solid #e2e2e2;border-bottom:0"></div>
<div class="abs" style="left:363.5px;top:444px;width:1448.5px;height:58px;background:#f0f0f0"></div>
<svg style="left:384px;top:428px" width="12" height="12" viewBox="0 0 12 12" fill="none" stroke="#e8860c" stroke-width="1.1"><rect x=".7" y=".7" width="10.6" height="10.6" rx="1.3"/><path d="M.7,4 H11.3 M.7,7.4 H11.3 M4.2,4 V11.3 M7.8,4 V11.3"/></svg>
<div class="t" style="left:402px;top:427px;font-size:13.5px;font-weight:bold;color:#e07c0a;line-height:15px">1</div>
<div class="t" style="left:368.5px;top:465px;font-size:14px;letter-spacing:-.15px;color:#8d8d8d;line-height:17px">FS CAPTION</div>
<div class="t" style="left:912.5px;top:465px;font-size:14px;letter-spacing:0;color:#8d8d8d;line-height:17px">NAME</div>
<div class="t" style="left:1500px;top:465px;width:84.6px;text-align:right;font-size:14px;letter-spacing:.9px;color:#8d8d8d;line-height:17px">2024</div>
<div class="t" style="left:1560px;top:465px;width:79px;text-align:right;font-size:14px;letter-spacing:-.1px;color:#8d8d8d;line-height:17px">AJE</div>
<div class="t" style="left:1620px;top:465px;width:66.4px;text-align:right;font-size:14px;letter-spacing:-.8px;color:#8d8d8d;line-height:17px">RC</div>
<div class="t" style="left:1700px;top:455.6px;width:76.6px;text-align:right;font-size:14px;letter-spacing:.3px;color:#8d8d8d;line-height:17px">FINAL</div>
<div class="t" style="left:1700px;top:474.6px;width:76.2px;text-align:right;font-size:14px;letter-spacing:0;color:#8d8d8d;line-height:17px">AMOUNT</div>
<div class="tr" style="top:502px"><span class="c1" style="letter-spacing:0.451px">Computer Equipment Cost</span><span class="c2" style="letter-spacing:0.583px">Computer Equipment</span><span class="n" style="right:227.36px;letter-spacing:1.138px">1,178</span><span class="n" style="right:174.60px">-</span><span class="n" style="right:127.10px">-</span><span class="n" style="right:35.36px;letter-spacing:1.138px">1,178</span></div>
<div class="tr" style="top:532px"><span class="c2 b" style="letter-spacing:0.278px">Total Computer Equipment Cost</span><span class="n b" style="right:227.19px;letter-spacing:1.313px">1,178</span><span class="n b" style="right:174.60px">-</span><span class="n b" style="right:127.10px">-</span><span class="n b" style="right:35.19px;letter-spacing:1.313px">1,178</span></div>
<div class="tr" style="top:562px"><span class="c1" style="letter-spacing:0.542px">Computer Equipment Accumulated Depreciation</span><span class="c2" style="letter-spacing:0.521px">Computer Equipment Depreciation</span><span class="n" style="right:227.50px;letter-spacing:1.003px">(236)</span><span class="n" style="right:174.60px">-</span><span class="n" style="right:127.10px">-</span><span class="n" style="right:35.50px;letter-spacing:1.003px">(236)</span></div>
<div class="tr" style="top:592px"><span class="c2 b" style="letter-spacing:0.35px">Total Computer Equipment Accumulated Depreciation</span><span class="n b" style="right:227.30px;letter-spacing:1.203px">(236)</span><span class="n b" style="right:174.60px">-</span><span class="n b" style="right:127.10px">-</span><span class="n b" style="right:35.30px;letter-spacing:1.203px">(236)</span></div>
<div class="tr" style="top:622px"><span class="c1" style="letter-spacing:0.412px">Plant and machinery Cost</span><span class="c2" style="letter-spacing:0.453px">Plant and Machinery</span><span class="n" style="right:227.71px;letter-spacing:0.788px">4,751</span><span class="n" style="right:174.60px">-</span><span class="n" style="right:127.10px">-</span><span class="n" style="right:35.71px;letter-spacing:0.788px">4,751</span></div>
<div class="tr" style="top:652px"><span class="c2 b" style="letter-spacing:0.309px">Total Plant and machinery Cost</span><span class="n b" style="right:227.34px;letter-spacing:1.163px">4,751</span><span class="n b" style="right:174.60px">-</span><span class="n b" style="right:127.10px">-</span><span class="n b" style="right:35.34px;letter-spacing:1.163px">4,751</span></div>
<div class="tr" style="top:682px"><span class="c1" style="letter-spacing:0.51px">Plant and machinery Accumulated Depreciation</span><span class="c2" style="letter-spacing:0.553px">Plant/Machinery Depreciation</span><span class="n" style="right:227.81px;letter-spacing:0.69px">(1,902)</span><span class="n" style="right:174.60px">-</span><span class="n" style="right:127.10px">-</span><span class="n" style="right:35.81px;letter-spacing:0.69px">(1,902)</span></div>
<div class="tr" style="top:712px"><span class="c2 b" style="letter-spacing:0.361px">Total Plant and machinery Accumulated Depreciation</span><span class="n b" style="right:227.56px;letter-spacing:0.94px">(1,902)</span><span class="n b" style="right:174.60px">-</span><span class="n b" style="right:127.10px">-</span><span class="n b" style="right:35.56px;letter-spacing:0.94px">(1,902)</span></div>
<div class="tr" style="top:742px"><span class="c1" style="letter-spacing:0.577px">Accumulated depreciation of office equipment and furniture</span><span class="c2" style="letter-spacing:0.499px">Office Equipment Depreciation</span><span class="n" style="right:227.85px;letter-spacing:0.653px">(400)</span><span class="n" style="right:174.60px">-</span><span class="n" style="right:127.10px">-</span><span class="n" style="right:35.85px;letter-spacing:0.653px">(400)</span></div>
<div class="tr" style="top:772px"><span class="c2 b" style="letter-spacing:0.355px">Total Accumulated depreciation of office equipment and furniture</span><span class="n b" style="right:227.47px;letter-spacing:1.028px">(400)</span><span class="n b" style="right:174.60px">-</span><span class="n b" style="right:127.10px">-</span><span class="n b" style="right:35.47px;letter-spacing:1.028px">(400)</span></div>
<div class="tr" style="top:802px"><span class="c1" style="letter-spacing:0.412px">Furniture, Fixtures, Fittings and Soft Furnishings</span><span class="c2" style="letter-spacing:0.483px">Furniture and Fixtures</span><span class="n" style="right:227.81px;letter-spacing:0.688px">5,404</span><span class="n" style="right:174.60px">-</span><span class="n" style="right:127.10px">-</span><span class="n" style="right:35.81px;letter-spacing:0.688px">5,404</span></div>
<div class="tr" style="top:832px"><span class="c2 b" style="letter-spacing:0.275px">Total Furniture, Fixtures, Fittings and Soft Furnishings</span><span class="n b" style="right:227.46px;letter-spacing:1.038px">5,404</span><span class="n b" style="right:174.60px">-</span><span class="n b" style="right:127.10px">-</span><span class="n b" style="right:35.46px;letter-spacing:1.038px">5,404</span></div>
<div class="tr" style="top:862px"><span class="c1" style="letter-spacing:0.455px">Accumulated depreciation of Furniture, Fixtures, Fittings and Soft Furnishings</span><span class="c2" style="letter-spacing:0.58px">Furniture/Fixture Depreciation</span><span class="n" style="right:227.81px;letter-spacing:0.69px">(1,198)</span><span class="n" style="right:174.60px">-</span><span class="n" style="right:127.10px">-</span><span class="n" style="right:35.81px;letter-spacing:0.69px">(1,198)</span></div>
<div class="tr" style="top:892px"><span class="c2 b" style="letter-spacing:0.286px">Total Accumulated depreciation of Furniture, Fixtures, Fittings and Soft Furnishings</span><span class="n b" style="right:227.56px;letter-spacing:0.94px">(1,198)</span><span class="n b" style="right:174.60px">-</span><span class="n b" style="right:127.10px">-</span><span class="n b" style="right:35.56px;letter-spacing:0.94px">(1,198)</span></div>
<div class="tr" style="top:922px"><span class="c1" style="letter-spacing:0.417px">Motor Vehicles Cost</span><span class="c2" style="letter-spacing:0.475px">Motor Vehicles</span><span class="n" style="right:227.63px;letter-spacing:0.874px">34,170</span><span class="n" style="right:174.60px">-</span><span class="n" style="right:127.10px">-</span><span class="n" style="right:35.63px;letter-spacing:0.874px">34,170</span><span class="" style="left:1444.5px">1</span></div>
<div class="tr" style="top:952px"><span class="c2 b" style="letter-spacing:0.212px">Total Motor Vehicles Cost</span><span class="n b" style="right:227.25px;letter-spacing:1.254px">34,170</span><span class="n b" style="right:174.60px">-</span><span class="n b" style="right:127.10px">-</span><span class="n b" style="right:35.25px;letter-spacing:1.254px">34,170</span><span class="b" style="left:1444.5px">1</span></div>
<div class="tr" style="top:982px"></div>
<div class="vl" style="left:907px"></div>
<div class="vl" style="left:1519px"></div>
<div class="vl" style="left:1608px"></div>
<div class="vl" style="left:1663px"></div>
<div class="vl" style="left:1710px"></div>
<div class="vl" style="left:1800px"></div>
<svg style="left:1499px;top:511.5px" width="13" height="12" viewBox="0 0 13 12" fill="none" stroke="#9a9a9a" stroke-width="1"><rect x=".6" y=".6" width="11.6" height="10.8" rx="1.2"/><path d="M.6,4 H12.2 M.6,7.6 H12.2 M4.4,4 V11.4 M8.4,4 V11.4"/></svg>
<!--TABLE-END-->
<div class="abs" style="left:323px;top:93px;width:11px;height:897px;background:linear-gradient(to right,rgba(0,0,0,.055),rgba(0,0,0,0))"></div>
<!--RSIDE-START-->
<!-- right dark sidebar icons -->
<svg style="left:1889px;top:108px" width="16" height="16" viewBox="0 0 16 16" fill="none" stroke="#fff" stroke-width="1.7" stroke-linejoin="round"><path d="M1.4,3.2 L5.6,1.6 L10.4,3.2 L14.6,1.6 V12.6 L10.4,14.2 L5.6,12.6 L1.4,14.2 Z"/><path d="M5.6,1.6 V12.6 M10.4,3.2 V14.2"/></svg>
<svg style="left:1889px;top:165px" width="16" height="16" viewBox="0 0 16 16"><path d="M1.4,14.8 L1,11.6 L9.6,3 L13,6.4 L4.4,15 Z M10.6,2 L11.6,1 Q12.6,0.2 13.6,1 L15,2.4 Q15.8,3.4 15,4.4 L14,5.4 Z" fill="#fff"/></svg>
<svg style="left:1890px;top:223px" width="15" height="17" viewBox="0 0 15 17" fill="none" stroke="#fff" stroke-width="1.8" stroke-linejoin="round" stroke-linecap="round"><path d="M2.2,1.6 L3.2,15.2"/><path d="M2.8,5 Q5.4,3.6 7.8,5 Q10.4,6.6 13,5.6 V12 Q10.4,13 7.8,11.6 Q5.4,10.2 3.2,11.4"/></svg>
<svg style="left:1888px;top:281px" width="18" height="18" viewBox="0 0 18 18" fill="none" stroke="#fff" stroke-width="1.7" stroke-linecap="round"><circle cx="8.8" cy="8.8" r="7"/><path d="M8.8,9.4 L12,4.6 M4.4,9 L5.4,7"/></svg>
<div class="abs" style="left:1895.8px;top:270.2px;width:20px;height:20px;border-radius:50%;background:#f4433a;color:#fff;font-size:13px;font-weight:bold;text-align:center;line-height:20px;box-shadow:0 0 2px #1c1c1c">1</div>
<svg style="left:1890px;top:348px" width="15" height="17" viewBox="0 0 15 17" fill="none" stroke="#fff" stroke-width="1.7" stroke-linejoin="round"><path d="M1.6,3 Q1.6,1.4 3.2,1.4 H9 L13.2,5.6 V13.6 Q13.2,15.2 11.6,15.2 H3.2 Q1.6,15.2 1.6,13.6 Z"/><path d="M4.6,9 H10.4 M4.6,11.8 H10.4" stroke-width="1.5"/><path d="M8.6,1.6 V6 H13"/></svg>
<!-- FAB -->
<div class="abs" style="left:1868px;top:890px;width:52px;height:90px;overflow:hidden"><div class="abs" style="left:-34.5px;top:10.5px;width:64px;height:64px;border-radius:50%;background:#ea850f;box-shadow:0 0 0 1.6px #0d1a28"></div><svg style="left:0;top:33px" width="11" height="22" viewBox="0 0 11 22"><path d="M0,2.4 L2.6,1.6 V19 L0,20 Z M3.8,1.4 L9.8,0.2 V17.4 L3.8,19 Z" fill="#fff"/></svg></div>
<!--RSIDE-END-->
</body>
</html>
